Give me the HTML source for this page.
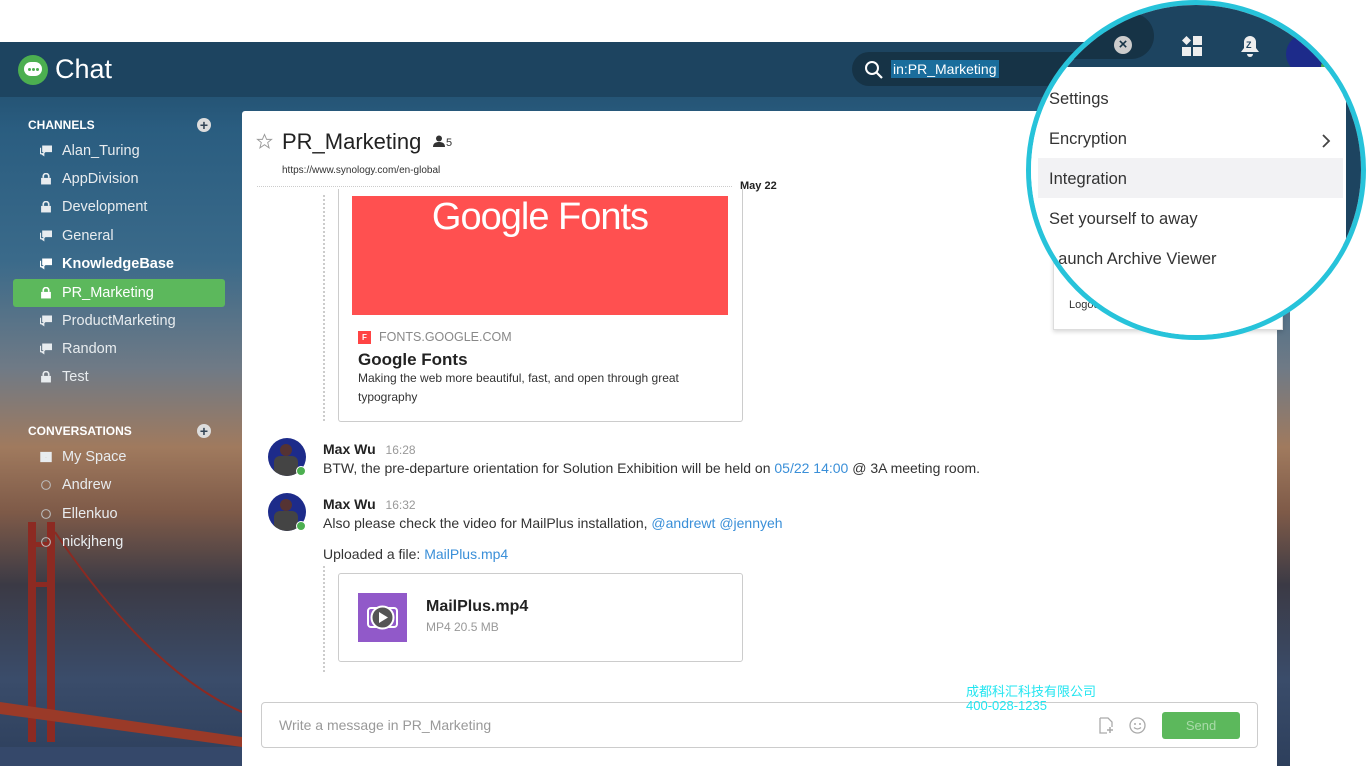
<!DOCTYPE html>
<html><head><meta charset="utf-8"><style>
*{margin:0;padding:0;box-sizing:border-box}
body{width:1366px;height:766px;overflow:hidden;background:#fff;font-family:"Liberation Sans",Arial,sans-serif;position:relative}
.app{position:absolute;left:0;top:42px;width:1290px;height:724px;background:linear-gradient(180deg,#1c4664 0%,#2a5d80 12%,#3a6a8a 30%,#6f7a86 45%,#a07a5e 56%,#7e5a48 65%,#3b3a45 75%,#3a4c6a 88%,#2d3f5c 100%);overflow:hidden}
.hdr{position:absolute;left:0;top:0;width:1290px;height:55px;background:#1d4460}
.logo{position:absolute;left:18px;top:13px;width:30px;height:30px;border-radius:50%;background:#4caf50}
.logo::after{content:"";position:absolute;left:6px;top:7px;width:18px;height:14px;border-radius:8px;background:#fff}
.logo i{position:absolute;top:13px;width:3px;height:3px;border-radius:50%;background:#4caf50;z-index:2}
.title{position:absolute;left:55px;top:12px;color:#fff;font-size:27px}
.search{position:absolute;left:852px;top:10px;width:310px;height:34px;border-radius:17px;background:#163346}
.search span{position:absolute;left:39px;top:8px;background:#1a6d9c;color:#fff;font-size:14px;padding:1px 2px}
.side{position:absolute;left:0;top:55px;width:242px;color:#eee}
.sec{position:absolute;left:28px;font-size:12px;font-weight:bold;color:#fff}
.plus{position:absolute;left:197px;width:14px;height:14px;border-radius:50%;background:#ddd;color:#345;font-size:14px;line-height:14px;text-align:center;font-weight:bold}
.it{position:absolute;left:13px;width:212px;height:28px;line-height:28px;padding-left:49px;font-size:14.5px;color:#e8ecef}
.it.act{background:#5cb85c;border-radius:3px;color:#fff}
.it b{font-weight:bold;color:#fff}
.ic{position:absolute;left:27px;top:8px;width:12px;height:12px}
.main{position:absolute;left:242px;top:69px;width:1035px;height:660px;background:#fff;border-radius:3px 3px 0 0}
.msgtxt{font-size:14px;color:#333}
.link{color:#3a8fd8}
.circ{position:absolute;left:1026px;top:0;width:340px;height:340px;border-radius:50%;border:5px solid #27c3da;overflow:hidden;background:#fff}
.circ .top{position:absolute;left:0;top:0;width:100%;height:62px;background:#1d4460}
.menu{position:absolute;left:18px;font-size:16.5px;color:#333}
</style></head><body>
<div class="app">
 <div class="hdr">
  <div class="logo"><i style="left:10px"></i><i style="left:14px"></i><i style="left:18px"></i></div>
  <div class="title">Chat</div>
  <div class="search">
   <svg style="position:absolute;left:12px;top:8px" width="20" height="20" viewBox="0 0 20 20"><circle cx="8" cy="8" r="6" fill="none" stroke="#fff" stroke-width="2"/><line x1="12.5" y1="12.5" x2="18" y2="18" stroke="#fff" stroke-width="2.2"/></svg>
   <span>in:PR_Marketing</span>
  </div>
 </div>
 <svg style="position:absolute;left:0;top:480px" width="242" height="250" viewBox="0 0 242 250"><rect x="28" y="0" width="8" height="220" fill="#8c2a22"/><rect x="47" y="0" width="8" height="220" fill="#8c2a22"/><rect x="28" y="20" width="27" height="5" fill="#8c2a22"/><rect x="28" y="60" width="27" height="5" fill="#8c2a22"/><path d="M0 180 L242 215 L242 225 L0 192Z" fill="#9a3a28"/><path d="M55 10 Q150 150 242 190" stroke="#8c2a22" stroke-width="2" fill="none"/><rect x="0" y="225" width="242" height="30" fill="#35486a"/></svg>
 <div class="side">
  <div class="sec" style="top:21px">CHANNELS</div><div class="plus" style="top:21px">+</div>
  <div class="it" style="top:40px"><svg class="ic" viewBox="0 0 11 10"><path d="M2 0h9v6H5l-2 2V6H2z M0 2h1v5h3v3L1 8H0z" fill="#e8ecef"/></svg>Alan_Turing</div>
  <div class="it" style="top:68px"><svg class="ic" viewBox="0 0 11 10"><rect x="1" y="4" width="9" height="6" fill="#e8ecef"/><path d="M3 4V2.5a2.5 2.5 0 015 0V4" stroke="#e8ecef" stroke-width="1.5" fill="none"/></svg>AppDivision</div>
  <div class="it" style="top:96px"><svg class="ic" viewBox="0 0 11 10"><rect x="1" y="4" width="9" height="6" fill="#e8ecef"/><path d="M3 4V2.5a2.5 2.5 0 015 0V4" stroke="#e8ecef" stroke-width="1.5" fill="none"/></svg>Development</div>
  <div class="it" style="top:125px"><svg class="ic" viewBox="0 0 11 10"><path d="M2 0h9v6H5l-2 2V6H2z M0 2h1v5h3v3L1 8H0z" fill="#e8ecef"/></svg>General</div>
  <div class="it" style="top:153px"><svg class="ic" viewBox="0 0 11 10"><path d="M2 0h9v6H5l-2 2V6H2z M0 2h1v5h3v3L1 8H0z" fill="#fff"/></svg><b>KnowledgeBase</b></div>
  <div class="it act" style="top:182px"><svg class="ic" viewBox="0 0 11 10"><rect x="1" y="4" width="9" height="6" fill="#fff"/><path d="M3 4V2.5a2.5 2.5 0 015 0V4" stroke="#fff" stroke-width="1.5" fill="none"/></svg>PR_Marketing</div>
  <div class="it" style="top:210px"><svg class="ic" viewBox="0 0 11 10"><path d="M2 0h9v6H5l-2 2V6H2z M0 2h1v5h3v3L1 8H0z" fill="#e8ecef"/></svg>ProductMarketing</div>
  <div class="it" style="top:238px"><svg class="ic" viewBox="0 0 11 10"><path d="M2 0h9v6H5l-2 2V6H2z M0 2h1v5h3v3L1 8H0z" fill="#e8ecef"/></svg>Random</div>
  <div class="it" style="top:266px"><svg class="ic" viewBox="0 0 11 10"><rect x="1" y="4" width="9" height="6" fill="#e8ecef"/><path d="M3 4V2.5a2.5 2.5 0 015 0V4" stroke="#e8ecef" stroke-width="1.5" fill="none"/></svg>Test</div>
  <div class="sec" style="top:327px">CONVERSATIONS</div><div class="plus" style="top:327px">+</div>
  <div class="it" style="top:346px"><svg class="ic" viewBox="0 0 11 10"><path d="M1 1h9v8H1z M1 5h3l1 1h1l1-1h3" stroke="#e8ecef" stroke-width="1.5" fill="#e8ecef"/></svg>My Space</div>
  <div class="it" style="top:374px"><svg class="ic" viewBox="0 0 11 10"><circle cx="5.5" cy="5" r="4" fill="none" stroke="#bbb" stroke-width="1"/></svg>Andrew</div>
  <div class="it" style="top:403px"><svg class="ic" viewBox="0 0 11 10"><circle cx="5.5" cy="5" r="4" fill="none" stroke="#bbb" stroke-width="1"/></svg>Ellenkuo</div>
  <div class="it" style="top:431px"><svg class="ic" viewBox="0 0 11 10"><circle cx="5.5" cy="5" r="4" fill="none" stroke="#bbb" stroke-width="1"/></svg>nickjheng</div>
 </div>
 <div class="main">
  <svg style="position:absolute;left:14px;top:22px" width="17" height="17" viewBox="0 0 24 24"><path d="M12 2l3 7h7l-5.5 4.5 2 7.5L12 16.5 5.5 21l2-7.5L2 9h7z" fill="none" stroke="#999" stroke-width="1.3"/></svg>
  <div style="position:absolute;left:40px;top:18px;font-size:22px;color:#222">PR_Marketing</div>
  <svg style="position:absolute;left:191px;top:24px" width="12" height="12" viewBox="0 0 12 12"><circle cx="6" cy="3.5" r="3" fill="#333"/><path d="M0 12c0-4 3-5 6-5s6 1 6 5z" fill="#333"/></svg>
  <div style="position:absolute;left:204px;top:26px;font-size:11px;color:#333">5</div>
  <div style="position:absolute;left:40px;top:54px;font-size:10px;color:#333">https://www.synology.com/en-global</div>
  <div style="position:absolute;left:15px;top:75px;width:475px;border-top:1px dotted #ccc"></div>
  <div style="position:absolute;left:498px;top:69px;font-size:11px;font-weight:bold;color:#222">May 22</div>
  <div style="position:absolute;left:81px;top:84px;height:226px;border-left:2px dotted #ccc"></div>
  <div style="position:absolute;left:96px;top:78px;width:405px;height:233px;border:1px solid #ccc;border-top:none;border-radius:0 0 3px 3px"></div>
  <div style="position:absolute;left:110px;top:85px;width:376px;height:119px;background:#ff5050;overflow:hidden"><div style="position:absolute;left:0;width:376px;top:0px;text-align:center;color:#fff;font-size:38px;letter-spacing:-1px">Google Fonts</div></div>
  <div style="position:absolute;left:116px;top:220px;width:13px;height:13px;background:#f44;color:#fff;font-size:8px;text-align:center;line-height:13px;font-weight:bold">F</div>
  <div style="position:absolute;left:137px;top:219px;font-size:12.5px;color:#888">FONTS.GOOGLE.COM</div>
  <div style="position:absolute;left:116px;top:239px;font-size:17px;font-weight:bold;color:#222">Google Fonts</div>
  <div style="position:absolute;left:116px;top:258px;font-size:12px;color:#333;line-height:19px;width:360px">Making the web more beautiful, fast, and open through great typography</div>
  <div style="position:absolute;left:26px;top:327px;width:38px;height:38px;border-radius:50%;background:#1d2b8a;overflow:hidden"><div style="position:absolute;left:12px;top:6px;width:12px;height:12px;border-radius:50%;background:#533"></div><div style="position:absolute;left:6px;top:18px;width:24px;height:22px;background:#444;border-radius:6px"></div></div>
  <div style="position:absolute;left:54px;top:355px;width:10px;height:10px;border-radius:50%;background:#4caf50;border:1px solid #fff"></div>
  <div style="position:absolute;left:81px;top:330px;font-size:14px;font-weight:bold;color:#222">Max Wu <span style="font-weight:normal;font-size:12px;color:#999;margin-left:6px">16:28</span></div>
  <div class="msgtxt" style="position:absolute;left:81px;top:349px">BTW, the pre-departure orientation for Solution Exhibition will be held on <span class="link">05/22 14:00</span> @ 3A meeting room.</div>
  <div style="position:absolute;left:26px;top:382px;width:38px;height:38px;border-radius:50%;background:#1d2b8a;overflow:hidden"><div style="position:absolute;left:12px;top:6px;width:12px;height:12px;border-radius:50%;background:#533"></div><div style="position:absolute;left:6px;top:18px;width:24px;height:22px;background:#444;border-radius:6px"></div></div>
  <div style="position:absolute;left:54px;top:410px;width:10px;height:10px;border-radius:50%;background:#4caf50;border:1px solid #fff"></div>
  <div style="position:absolute;left:81px;top:385px;font-size:14px;font-weight:bold;color:#222">Max Wu <span style="font-weight:normal;font-size:12px;color:#999;margin-left:6px">16:32</span></div>
  <div class="msgtxt" style="position:absolute;left:81px;top:404px">Also please check the video for MailPlus installation, <span class="link">@andrewt @jennyeh</span></div>
  <div class="msgtxt" style="position:absolute;left:81px;top:435px">Uploaded a file: <span class="link">MailPlus.mp4</span></div>
  <div style="position:absolute;left:81px;top:455px;height:106px;border-left:2px dotted #ccc"></div>
  <div style="position:absolute;left:96px;top:462px;width:405px;height:89px;border:1px solid #ccc;border-radius:3px"></div>
  <div style="position:absolute;left:116px;top:482px;width:49px;height:49px;background:#9159c9"><svg width="49" height="49" viewBox="0 0 49 49"><rect x="10" y="15" width="29" height="19" rx="3" fill="none" stroke="#fff" stroke-width="2"/><circle cx="24.5" cy="24.5" r="11" fill="#555" stroke="#fff" stroke-width="2"/><path d="M21 19l9 5.5-9 5.5z" fill="#fff"/></svg></div>
  <div style="position:absolute;left:184px;top:487px;font-size:16px;font-weight:bold;color:#222">MailPlus.mp4</div>
  <div style="position:absolute;left:184px;top:509px;font-size:12px;color:#999">MP4 20.5 MB</div>
  <div style="position:absolute;left:19px;top:591px;width:997px;height:46px;border:1px solid #ccc;border-radius:4px"></div>
  <div style="position:absolute;left:37px;top:606px;font-size:14px;color:#999">Write a message in PR_Marketing</div>
  <svg style="position:absolute;left:857px;top:606px" width="15" height="17" viewBox="0 0 15 17"><path d="M1 1h8l4 4v5 M1 1v15h7" fill="none" stroke="#aaa" stroke-width="1.3"/><path d="M11 10v6 M8 13h6" stroke="#aaa" stroke-width="1.5"/></svg>
  <svg style="position:absolute;left:887px;top:606px" width="17" height="17" viewBox="0 0 17 17"><circle cx="8.5" cy="8.5" r="7.5" fill="none" stroke="#aaa" stroke-width="1.3"/><circle cx="6" cy="7" r="1" fill="#aaa"/><circle cx="11" cy="7" r="1" fill="#aaa"/><path d="M5 10.5q3.5 3 7 0" fill="none" stroke="#aaa" stroke-width="1.2"/></svg>
  <div style="position:absolute;left:920px;top:601px;width:78px;height:27px;background:#5cb85c;border-radius:3px;color:#a9dba9;font-size:13px;text-align:center;line-height:27px">Send</div>
 </div>
</div>
<div style="position:absolute;left:966px;top:685px;color:#22e5f0;font-size:13px;line-height:14px;font-family:'Liberation Sans','Noto Sans CJK SC',sans-serif">成都科汇科技有限公司<br>400-028-1235</div>
<div style="position:absolute;left:1053px;top:240px;width:230px;height:90px;background:#fff;border:1px solid #ddd;box-shadow:0 2px 4px rgba(0,0,0,.15)"></div>
<div style="position:absolute;left:1069px;top:299px;font-size:11px;color:#333">Logout</div>
<div class="circ">
 <div class="top"></div>
 <div style="position:absolute;left:0;top:8px;width:123px;height:46px;border-radius:0 23px 23px 0;background:#163346"></div>
 <div style="position:absolute;left:83px;top:31px;width:18px;height:18px;border-radius:50%;background:#ccc;color:#163346;font-size:15px;font-weight:bold;line-height:18px;text-align:center">×</div>
 <svg style="position:absolute;left:151px;top:31px" width="20" height="20" viewBox="0 0 20 20"><path d="M4.5 0L9 4.5 4.5 9 0 4.5z" fill="#eee"/><rect x="11" y="0" width="9" height="9" fill="#eee"/><rect x="0" y="11" width="9" height="9" fill="#eee"/><rect x="11" y="11" width="9" height="9" fill="#eee"/></svg>
 <svg style="position:absolute;left:209px;top:30px" width="20" height="22" viewBox="0 0 20 22"><path d="M10 1a6 6 0 016 6v6l3 4H1l3-4V7a6 6 0 016-6z" fill="#eee"/><path d="M7 19a3 3 0 006 0" fill="#eee"/><text x="6" y="13" font-size="9" font-weight="bold" fill="#1d4460" font-family="Liberation Sans">Z</text></svg>
 <div style="position:absolute;left:255px;top:29px;width:40px;height:40px;border-radius:50%;background:#1d2b8a"></div>
 <div style="position:absolute;left:290px;top:56px;width:10px;height:10px;border-radius:50%;background:#4caf50"></div>
 <div style="position:absolute;left:312px;top:62px;width:20px;height:280px;background:#1d4460"></div>
 <div style="position:absolute;left:-5px;top:62px;width:320px;height:280px;background:#fff"></div>
 <div style="position:absolute;left:7px;top:153px;width:305px;height:40px;background:#f2f2f4"></div>
 <div class="menu" style="top:85px">Settings</div>
 <div class="menu" style="top:125px">Encryption</div>
 <svg style="position:absolute;left:290px;top:128px" width="10" height="16" viewBox="0 0 10 16"><path d="M2 2l6 6-6 6" fill="none" stroke="#444" stroke-width="1.8"/></svg>
 <div class="menu" style="top:165px">Integration</div>
 <div class="menu" style="top:205px">Set yourself to away</div>
 <div class="menu" style="top:245px">Launch Archive Viewer</div>
</div>
</body></html>
